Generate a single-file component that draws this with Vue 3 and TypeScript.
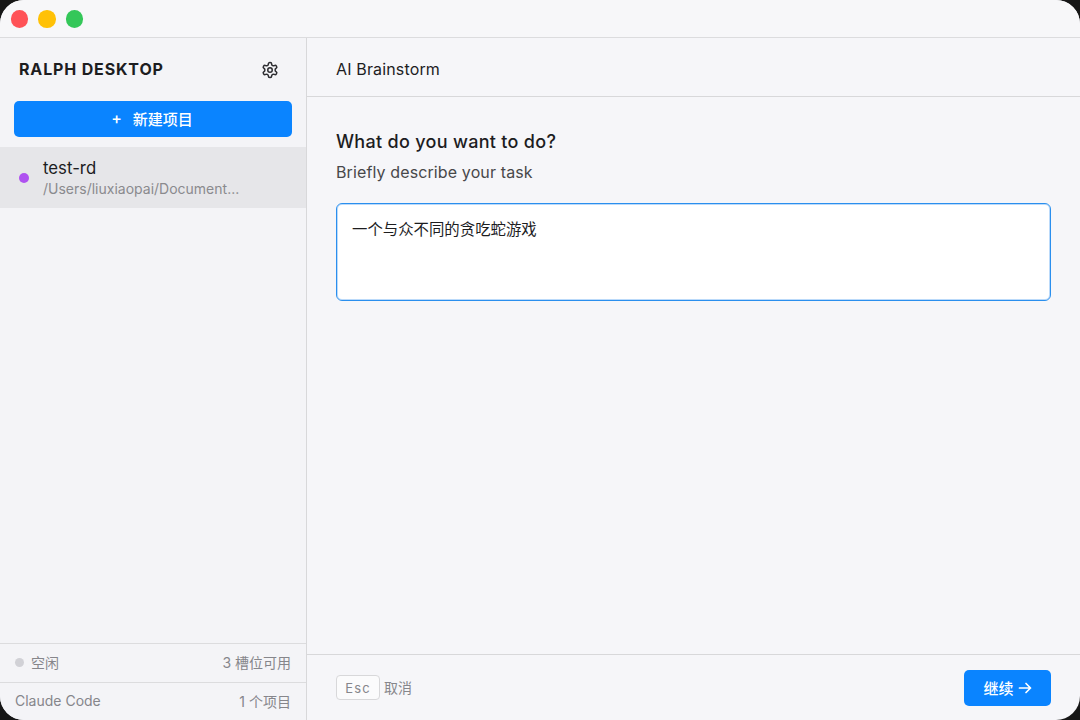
<script setup lang="ts">
const task: string = '一个与众不同的贪吃蛇游戏'
</script>

<template>
  <div class="window">
    <div class="titlebar">
      <span class="light red"></span>
      <span class="light yellow"></span>
      <span class="light green"></span>
    </div>
    <div class="body">
      <aside class="sidebar">
        <div class="side-head">
          <span class="brand">RALPH DESKTOP</span>
          <svg class="gear" width="18" height="18" viewBox="0 0 24 24" fill="none" stroke="#2c2c30" stroke-width="2" stroke-linecap="round" stroke-linejoin="round">
            <path d="M12.22 2h-.44a2 2 0 0 0-2 2v.18a2 2 0 0 1-1 1.73l-.43.25a2 2 0 0 1-2 0l-.15-.08a2 2 0 0 0-2.73.73l-.22.38a2 2 0 0 0 .73 2.73l.15.1a2 2 0 0 1 1 1.72v.51a2 2 0 0 1-1 1.74l-.15.09a2 2 0 0 0-.73 2.73l.22.38a2 2 0 0 0 2.73.73l.15-.08a2 2 0 0 1 2 0l.43.25a2 2 0 0 1 1 1.73V20a2 2 0 0 0 2 2h.44a2 2 0 0 0 2-2v-.18a2 2 0 0 1 1-1.73l.43-.25a2 2 0 0 1 2 0l.15.08a2 2 0 0 0 2.73-.73l.22-.39a2 2 0 0 0-.73-2.73l-.15-.08a2 2 0 0 1-1-1.74v-.5a2 2 0 0 1 1-1.74l.15-.09a2 2 0 0 0 .73-2.73l-.22-.38a2 2 0 0 0-2.73-.73l-.15.08a2 2 0 0 1-2 0l-.43-.25a2 2 0 0 1-1-1.73V4a2 2 0 0 0-2-2z" />
            <circle cx="12" cy="12" r="3" />
          </svg>
        </div>
        <button class="new-btn"><span class="plus">+</span>新建项目</button>
        <div class="project">
          <span class="dot"></span>
          <div class="project-text">
            <div class="project-name">test-rd</div>
            <div class="project-path">/Users/liuxiaopai/Document...</div>
          </div>
        </div>
        <div class="spacer"></div>
        <div class="status-row first">
          <span class="status-left"><span class="idle"></span>空闲</span>
          <span>3 槽位可用</span>
        </div>
        <div class="status-row second">
          <span>Claude Code</span>
          <span>1 个项目</span>
        </div>
      </aside>
      <main class="main">
        <header class="main-head">AI Brainstorm</header>
        <section class="content">
          <h1 class="question">What do you want to do?</h1>
          <p class="hint">Briefly describe your task</p>
          <div class="input">{{ task }}</div>
        </section>
        <footer class="main-foot">
          <div class="cancel"><kbd class="esc">Esc</kbd><span>取消</span></div>
          <button class="next">继续<span class="arrow">
            <svg width="14" height="14" viewBox="0 0 14 14" fill="none" stroke="#fff" stroke-width="1.7" stroke-linecap="round" stroke-linejoin="round">
              <path d="M1.500 7h11M8 2.500 12.500 7 8 11.500" />
            </svg>
          </span></button>
        </footer>
      </main>
    </div>
  </div>
</template>

<style>
html, body {
  margin: 0;
  background: #161616;
}
</style>

<style scoped>
* {
  box-sizing: border-box;
}
.window {
  width: 1080px;
  height: 720px;
  background: #f6f6f9;
  border-radius: 24px;
  overflow: hidden;
  display: flex;
  flex-direction: column;
  font-family: Inter, "Noto Sans CJK SC", sans-serif;
  color: #1d1d1f;
}
.titlebar {
  height: 38px;
  flex: none;
  display: flex;
  align-items: center;
  gap: 10px;
  padding: 1px 0 0 10.500px;
  background: #f7f7f9;
  border-bottom: 1px solid #dcdcde;
}
.light {
  width: 17.500px;
  height: 17.500px;
  border-radius: 50%;
}
.red { background: #ff5257; }
.yellow { background: #ffc107; }
.green { background: #34c759; }
.body {
  flex: 1;
  display: flex;
  min-height: 0;
}
.sidebar {
  width: 307px;
  flex: none;
  display: flex;
  flex-direction: column;
  background: #f4f4f7;
  border-right: 1px solid #d8d8da;
}
.side-head {
  height: 63px;
  flex: none;
  display: flex;
  align-items: center;
  justify-content: space-between;
  padding: 0 27px 2px 19px;
}
.brand {
  font-size: 16px;
  font-weight: 700;
  letter-spacing: 0.85px;
}
.gear {
  flex: none;
  margin-top: 2px;
}
.new-btn {
  margin: 0 14px;
  width: 278px;
  height: 36px;
  flex: none;
  border: 0;
  border-radius: 5px;
  background: #0a84ff;
  color: #fff;
  font-family: inherit;
  font-size: 15px;
  font-weight: 500;
  display: flex;
  align-items: center;
  justify-content: center;
  padding: 0 2px 2px 0;
}
.plus {
  margin-right: 11px;
  font-size: 16px;
}
.project {
  margin-top: 10px;
  height: 61px;
  flex: none;
  background: #e6e6e9;
  display: flex;
  align-items: center;
  padding-left: 19px;
  gap: 14px;
}
.dot {
  width: 10px;
  height: 10px;
  border-radius: 50%;
  background: #af52f0;
  flex: none;
}
.project-text {
  display: flex;
  flex-direction: column;
  gap: 1px;
}
.project-name {
  font-size: 16.800px;
  line-height: 21px;
  color: #1d1d1f;
  padding-top: 1px;
}
.project-path {
  font-size: 14px;
  line-height: 18px;
  color: #8a8a8e;
}
.spacer {
  flex: 1;
}
.status-row {
  flex: none;
  display: flex;
  align-items: center;
  justify-content: space-between;
  padding: 0 15px 2px;
  border-top: 1px solid #dcdcde;
  font-size: 14px;
  color: #86868b;
}
.first {
  height: 39px;
}
.second {
  height: 38px;
}
.status-left {
  display: flex;
  align-items: center;
  gap: 7px;
}
.idle {
  width: 9px;
  height: 9px;
  border-radius: 50%;
  background: #d1d1d6;
}
.main {
  flex: 1;
  min-width: 0;
  display: flex;
  flex-direction: column;
}
.main-head {
  height: 59px;
  flex: none;
  display: flex;
  align-items: center;
  padding: 4px 29px 0;
  border-bottom: 1px solid #d8d8da;
  font-size: 16px;
  letter-spacing: 0.15px;
}
.content {
  flex: 1;
  padding: 32px 29px 0;
}
.question {
  margin: 0;
  font-size: 18px;
  line-height: 26px;
  font-weight: 500;
  letter-spacing: 0.3px;
}
.hint {
  margin: 6px 0 0;
  font-size: 16px;
  line-height: 22px;
  letter-spacing: 0.12px;
  color: #48484a;
}
.input {
  margin-top: 20px;
  height: 98px;
  border: 1px solid #2a8fee;
  box-shadow: inset 0 0 0 1px rgba(60, 150, 240, 0.35);
  border-radius: 6px;
  background: #fff;
  padding: 15px 15px;
  font-size: 15.400px;
  line-height: 22px;
  color: #1d1d1f;
}
.main-foot {
  height: 66px;
  flex: none;
  display: flex;
  align-items: center;
  justify-content: space-between;
  padding: 0 29px;
  border-top: 1px solid #d8d8da;
}
.cancel {
  display: flex;
  align-items: center;
  gap: 4px;
  font-size: 14px;
  line-height: 18px;
  color: #86868b;
}
.esc {
  height: 25px;
  width: 44px;
  border: 1px solid #d8d8da;
  border-radius: 4px;
  background: #fbfbfc;
  display: flex;
  align-items: center;
  justify-content: center;
  font-family: inherit;
  font-size: 13px;
  letter-spacing: 1.2px;
  color: #86868b;
}
.next {
  width: 87px;
  height: 36px;
  border: 0;
  border-radius: 5px;
  background: #0a84ff;
  color: #fff;
  font-family: inherit;
  font-size: 15px;
  font-weight: 500;
  display: flex;
  align-items: center;
  justify-content: center;
  gap: 4px;
  padding-bottom: 1px;
}
.arrow {
  display: flex;
}
</style>
